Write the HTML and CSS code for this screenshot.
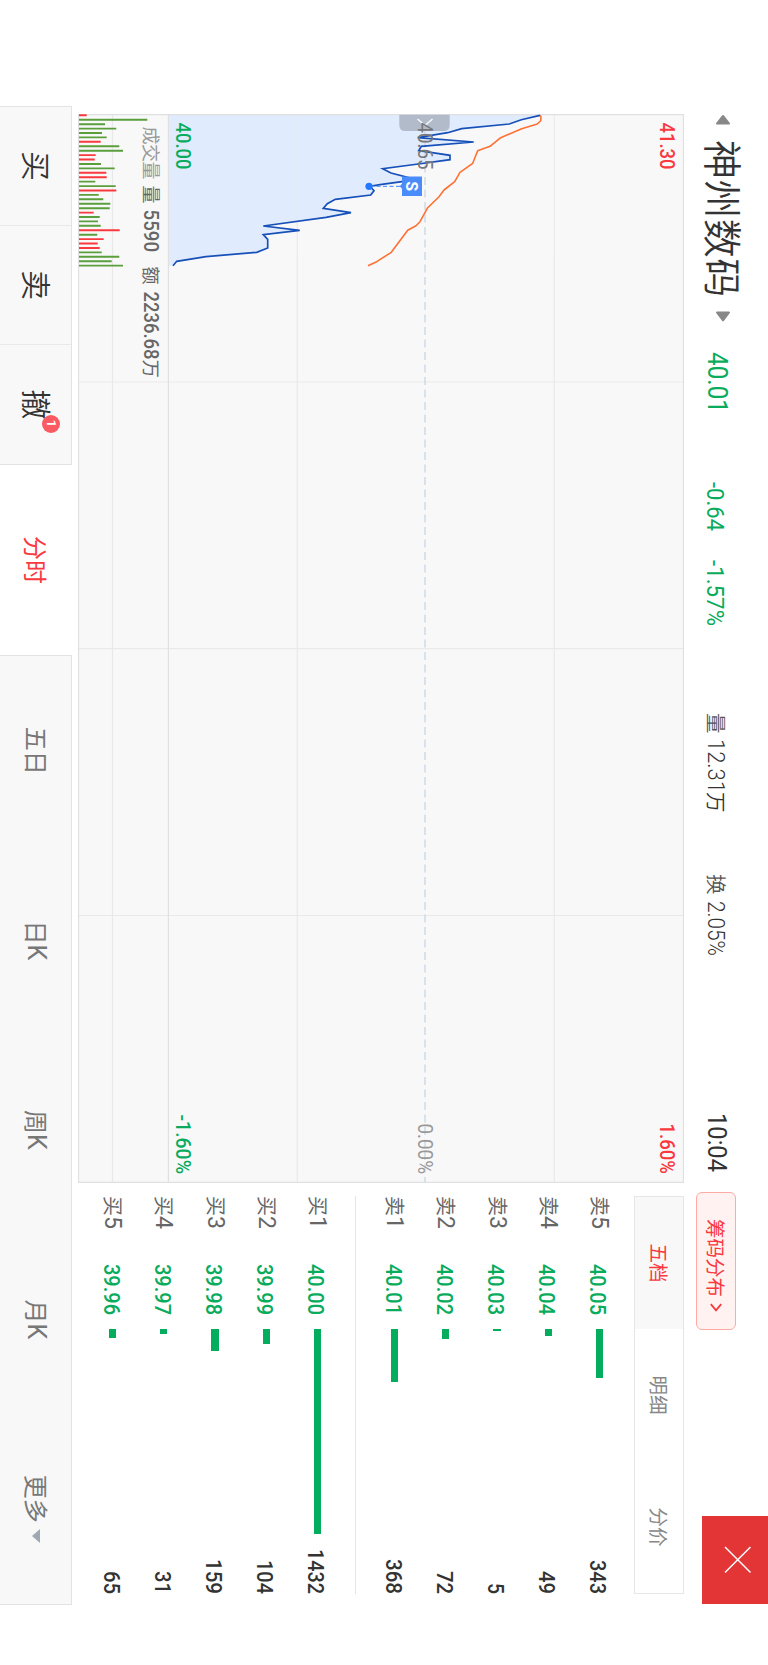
FILE: index.html
```html
<!DOCTYPE html>
<html lang="zh-CN">
<head>
<meta charset="utf-8">
<title>神州数码</title>
<link rel="stylesheet" href="styles.css">
</head>
<body>
<div class="stage">
  <header class="head">
    <svg class="tri" width="11" height="16"><path d="M1.5 7 9 1.2Q10.6 .4 10.6 2V14Q10.6 15.6 9 14.8L1.5 9Q.3 8 1.5 7Z"/></svg>
    <h1 class="name">神州数码</h1>
    <svg class="tri" width="11" height="16"><path d="M9.8 7 2 1.2Q.4 .4 .4 2V14Q.4 15.6 2 14.8L9.8 9Q11 8 9.8 7Z"/></svg>
    <svg class="num price green" width="61" height="20"><text y="20" textLength="61" lengthAdjust="spacingAndGlyphs">40.01</text></svg>
    <svg class="num chg green" width="49" height="16"><text y="16.500" textLength="49" lengthAdjust="spacingAndGlyphs">-0.64</text></svg>
    <svg class="num chg green" width="66" height="16"><text y="16.500" textLength="66" lengthAdjust="spacingAndGlyphs">-1.57%</text></svg>
    <div class="stat"><span class="k">量</span><svg class="num mid" width="51" height="17"><text x="-2" y="17" textLength="54" lengthAdjust="spacingAndGlyphs">12.31</text></svg><span class="unit">万</span></div>
    <div class="stat"><span class="k">换</span><svg class="num mid" width="54" height="17"><text x="-1" y="17" textLength="55" lengthAdjust="spacingAndGlyphs">2.05%</text></svg></div>
    <svg class="num clock" width="57" height="18"><text x="-2" y="18" textLength="59" lengthAdjust="spacingAndGlyphs">10:04</text></svg>
    <div class="chip">筹码分布<svg width="9" height="12"><path d="M1.2 .8 7.4 6 1.2 11.2"/></svg></div>
    <span></span>
    <div class="close"><svg width="88" height="66"><path d="M31 17.5 56.500 43M56.500 17.500 31 43"/></svg></div>
  </header>

  <main class="main">
    <svg class="chart" width="1069" height="606" viewBox="114 84 1069 606">
      <rect class="bg" x="114.700" y="84.500" width="1067.600" height="605"/>
      <path class="area" d="M114.700 599.500V228L119.700 246.700 124 258.700 128.700 306.300 132.700 320.300 137.700 350.300 142 294.300 146.300 346.700 150.700 349.300 155.300 318 159.700 318 164 349.700 168.700 385.300 173 377 178 358 181.700 366 184.700 388 186.300 398 190.700 394 195 397.300 199.300 432.700 203.700 440.700 208.300 444.700 212.700 417 217.300 442 226 504.700 230.300 468.300 234.700 504.700 239.300 500.300 248 500.300 252.300 511.300 256.700 562 261.300 591.300 265.700 595V599.500Z"/>
      <path class="grid" d="M114.700 213.700H1182.300M114.700 470.700H1182.300M114.700 655.500H1182.300M382 84.500V689.500M648.700 84.500V689.500M915.500 84.500V689.500"/>
      <path class="frame" d="M114.700 84.500H1182.300V689.500H114.700ZM114.700 599.600H1182.300"/>
      <path class="zero" d="M127 343H1182.300"/>
      <path class="avg" d="M115.300 228 117 227 120.700 227.300 124 230.700 128.700 246.300 137.700 267.300 146.300 278 150.700 290.300 163.300 295.300 172.300 308 181.700 313.300 190 324 196.700 329 207.700 340.300 221.700 348 225.700 352 230.300 360.300 252.300 376.700 261.700 391.300 265.700 400"/>
      <path class="line" d="M115.300 228 119.700 246.700 124 258.700 128.700 306.300 132.700 320.300 137.700 350.300 142 294.300 146.300 346.700 150.700 349.300 155.300 318 159.700 318 164 349.700 168.700 385.300 173 377 178 358 181.700 366 184.700 388 186.300 398 190.700 394 195 397.300 199.300 432.700 203.700 440.700 208.300 444.700 212.700 417 217.300 442 226 504.700 230.300 468.300 234.700 504.700 239.300 500.300 248 500.300 252.300 511.300 256.700 562 261.300 591.300 265.700 595"/>
      <path class="vol up" d="M115.300 689v-7.700M141.800 689v-21.700M155.100 689v-16.700M159.500 689v-15.700M172.800 689v-27.300M177.200 689v-27.700M190.500 689v-37.300M212.600 689v-14.700M230.300 689v-40.700M239.100 689v-24.700M243.500 689v-18.700M248 689v-20.700"/>
      <path class="vol down" d="M119.700 689v-68.300M124.200 689v-26M128.600 689v-37.300M133 689v-23M137.400 689v-27.700M146.300 689v-40.300M150.700 689v-44M164 689v-22M168.400 689v-35.700M181.600 689v-16.300M186.100 689v-36.700M194.900 689v-19.700M199.300 689v-24.300M203.700 689v-31.300M208.200 689v-30.700M217 689v-20.700M221.400 689v-19M225.800 689v-21.700M234.700 689v-18.300M252.400 689v-22.700M256.800 689v-40.300M261.200 689v-32.700M265.600 689v-44"/>
      <path class="handle" d="M114.700 318.300H125Q131 318.300 131 324.300V362.700Q131 368.700 125 368.700H114.700Z"/>
      <path class="handle-v" d="M119 335.500 125.500 343 119 350.500"/>
      <path class="pin" d="M186.300 368V396"/>
      <path class="flag" d="M176.400 346H196V366H188.800L186.300 368.300 183.800 366H176.400Z"/>
      <circle class="dot" cx="186.300" cy="399" r="3.600"/>
      <text class="s" x="186.300" y="361.800" text-anchor="middle">S</text>
      <g class="axis">
        <text class="red" x="122.500" y="108.500" textLength="47" lengthAdjust="spacingAndGlyphs">41.30</text>
        <text class="gray" x="122.500" y="350.500" textLength="47" lengthAdjust="spacingAndGlyphs">40.65</text>
        <text class="green" x="122.500" y="592" textLength="47" lengthAdjust="spacingAndGlyphs">40.00</text>
        <text class="red" x="1123.500" y="108.500" textLength="50.500" lengthAdjust="spacingAndGlyphs">1.60%</text>
        <text class="lgray" x="1123.500" y="350.500" textLength="50.500" lengthAdjust="spacingAndGlyphs">0.00%</text>
        <text class="green" x="1114.500" y="592" textLength="59.500" lengthAdjust="spacingAndGlyphs">-1.60%</text>
        <text class="cjk lgray" x="126.500" y="624" textLength="53">成交量</text>
        <text class="cjk dark" x="185.500" y="624">量</text>
        <text class="dark" x="209.500" y="624.300" textLength="42.500" lengthAdjust="spacingAndGlyphs">5590</text>
        <text class="cjk dark" x="266.500" y="624">额</text>
        <text class="dark" x="291.500" y="624.300" textLength="68" lengthAdjust="spacingAndGlyphs">2236.68</text>
        <text class="cjk dark" x="359.800" y="624">万</text>
      </g>
    </svg>

    <section class="book">
      <div class="seg"><span class="on">五档</span><span>明细</span><span>分价</span></div>
      <div class="side">
        <div class="row"><span class="lv">卖<i>5</i></span><svg class="num q green" width="51" height="16"><text y="16.700" textLength="51" lengthAdjust="spacingAndGlyphs">40.05</text></svg><b class="bar" style="width:49.300px"></b><svg class="num q" width="34" height="16"><text y="16.700" textLength="34" lengthAdjust="spacingAndGlyphs">343</text></svg></div>
        <div class="row"><span class="lv">卖<i>4</i></span><svg class="num q green" width="51" height="16"><text y="16.700" textLength="51" lengthAdjust="spacingAndGlyphs">40.04</text></svg><b class="bar" style="width:7.300px"></b><svg class="num q" width="23" height="16"><text y="16.700" textLength="23" lengthAdjust="spacingAndGlyphs">49</text></svg></div>
        <div class="row"><span class="lv">卖<i>3</i></span><svg class="num q green" width="51" height="16"><text y="16.700" textLength="51" lengthAdjust="spacingAndGlyphs">40.03</text></svg><b class="bar" style="width:2px"></b><svg class="num q" width="11" height="16"><text y="16.700" textLength="11" lengthAdjust="spacingAndGlyphs">5</text></svg></div>
        <div class="row"><span class="lv">卖<i>2</i></span><svg class="num q green" width="51" height="16"><text y="16.700" textLength="51" lengthAdjust="spacingAndGlyphs">40.02</text></svg><b class="bar" style="width:10px"></b><svg class="num q" width="23" height="16"><text y="16.700" textLength="23" lengthAdjust="spacingAndGlyphs">72</text></svg></div>
        <div class="row"><span class="lv">卖<i>1</i></span><svg class="num q green" width="51" height="16"><text y="16.700" textLength="51" lengthAdjust="spacingAndGlyphs">40.01</text></svg><b class="bar" style="width:53px"></b><svg class="num q" width="35" height="16"><text y="16.700" textLength="35" lengthAdjust="spacingAndGlyphs">368</text></svg></div>
      </div>
      <div class="side buy">
        <div class="row"><span class="lv">买<i>1</i></span><svg class="num q green" width="51" height="16"><text y="16.700" textLength="51" lengthAdjust="spacingAndGlyphs">40.00</text></svg><b class="bar" style="width:205.300px"></b><svg class="num q" width="45" height="16"><text y="16.700" textLength="45" lengthAdjust="spacingAndGlyphs">1432</text></svg></div>
        <div class="row"><span class="lv">买<i>2</i></span><svg class="num q green" width="51" height="16"><text y="16.700" textLength="51" lengthAdjust="spacingAndGlyphs">39.99</text></svg><b class="bar" style="width:15px"></b><svg class="num q" width="34" height="16"><text y="16.700" textLength="34" lengthAdjust="spacingAndGlyphs">104</text></svg></div>
        <div class="row"><span class="lv">买<i>3</i></span><svg class="num q green" width="51" height="16"><text y="16.700" textLength="51" lengthAdjust="spacingAndGlyphs">39.98</text></svg><b class="bar" style="width:22.700px"></b><svg class="num q" width="35" height="16"><text y="16.700" textLength="35" lengthAdjust="spacingAndGlyphs">159</text></svg></div>
        <div class="row"><span class="lv">买<i>4</i></span><svg class="num q green" width="51" height="16"><text y="16.700" textLength="51" lengthAdjust="spacingAndGlyphs">39.97</text></svg><b class="bar" style="width:5px"></b><svg class="num q" width="23" height="16"><text y="16.700" textLength="23" lengthAdjust="spacingAndGlyphs">31</text></svg></div>
        <div class="row"><span class="lv">买<i>5</i></span><svg class="num q green" width="51" height="16"><text y="16.700" textLength="51" lengthAdjust="spacingAndGlyphs">39.96</text></svg><b class="bar" style="width:9.700px"></b><svg class="num q" width="23" height="16"><text y="16.700" textLength="23" lengthAdjust="spacingAndGlyphs">65</text></svg></div>
      </div>
    </section>
  </main>

  <nav class="nav">
    <div class="trade">
      <span>买</span><span>卖</span><span><em>撤<small class="badge">1</small></em></span>
    </div>
    <div class="tab active">分时</div>
    <div class="tabs">
      <div class="tab">五日</div>
      <div class="tab">日<i>K</i></div>
      <div class="tab">周<i>K</i></div>
      <div class="tab">月<i>K</i></div>
      <div class="tab more">更多<svg width="14" height="8"><path d="M0 0H14L7 8Z"/></svg></div>
    </div>
  </nav>
</div>
</body>
</html>
```
FILE: styles.css
```css
* { box-sizing: border-box; }
html, body { margin: 0; padding: 0; }
html { overflow: hidden; }
body {
  width: 768px;
  height: 1665px;
  overflow: hidden;
  background: #fff;
  font-family: Roboto, "Noto Sans CJK SC", sans-serif;
  color: #333;
}
i, em { font-style: normal; }

/* Landscape screen turned a quarter clockwise */
.stage {
  width: 1665px;
  height: 768px;
  overflow: hidden;
  transform-origin: 0 0;
  transform: translateX(768px) rotate(90deg);
  display: flex;
  flex-direction: column;
}

.green { fill: #09ab5c; }
.red { fill: #f9383f; }
.gray { fill: #777; }
.lgray { fill: #999; }
.dark { fill: #666; }

.num { overflow: visible; flex: none; display: block; }
.num text { font-family: Roboto, sans-serif; }
.num:not(.green) { fill: #333; }

/* Header */
.head {
  height: 84px;
  flex: none;
  padding-left: 114px;
  display: grid;
  grid-template-columns: 26px 171px 41px 130px 78px 153px 161px 241px 77px 138px 186px 88px;
  align-items: start;
}
.tri { fill: #888; margin-top: 37px; display: block; }
.name {
  margin: 18px 0 0;
  font: 350 39px/50px "Noto Sans CJK SC", sans-serif;
  letter-spacing: .4px;
  white-space: nowrap;
}
.price { font-size: 28.500px; margin-top: 40px; }
.chg { font-size: 23px; margin-top: 45px; }
.mid { font-size: 24px; }
.clock { font-size: 25px; margin-top: 42px; }
.stat {
  display: flex;
  align-items: center;
  margin-top: 37px;
  height: 29px;
  font: 350 20.500px/29px "Noto Sans CJK SC", sans-serif;
}
.stat .k { width: 28px; color: #555; }
.chip {
  margin-top: 32px;
  width: 138px;
  height: 40px;
  border: 1px solid #ffaba5;
  border-radius: 6px;
  background: #fff2f1;
  color: #f9383f;
  display: flex;
  align-items: center;
  padding-left: 26px;
  font: 400 19.500px/38px "Noto Sans CJK SC", sans-serif;
}
.chip svg { margin-left: 6px; fill: none; stroke: #f9383f; stroke-width: 1.800; }
.close { height: 66px; background: #e33436; }
.close svg { display: block; fill: none; stroke: #fff; stroke-width: 1.500; }

/* Chart */
.main { display: flex; height: 606px; padding-left: 114px; }
.chart { display: block; flex: none; }
.bg { fill: #f8f8f8; }
.area { fill: #e0ebfd; }
.grid { fill: none; stroke: #e9e9e9; stroke-width: 1.200; }
.frame { fill: none; stroke: #e0e0e0; stroke-width: 1.200; }
.zero { stroke: #d0dae4; stroke-width: 1.500; stroke-dasharray: 8 4.500; }
.avg { fill: none; stroke: #ff7032; stroke-width: 1.600; stroke-linejoin: round; }
.line { fill: none; stroke: #1650b8; stroke-width: 1.700; }
.vol { fill: none; stroke-width: 1.900; }
.up { stroke: #f9383f; }
.down { stroke: #5a9f3c; }
.handle { fill: #b1bbca; }
.handle-v { fill: none; stroke: #fff; stroke-width: 1.300; }
.pin { stroke: #5c9bff; stroke-width: 1.300; stroke-dasharray: 4 2.500; }
.flag { fill: #4b8cfc; }
.dot { fill: #2478ff; }
.s { fill: #fff; font: 700 16px Roboto, sans-serif; }
.axis text { font-family: Roboto, sans-serif; font-size: 20px; font-weight: 500; }
.axis .gray, .axis .lgray { font-weight: 400; }
.axis .cjk { font-family: "Noto Sans CJK SC", sans-serif; font-size: 18px; font-weight: 400; }

/* Order book */
.book { margin-left: 13px; width: 398px; }
.seg {
  height: 50px;
  display: grid;
  grid-template-columns: repeat(3, 1fr);
  border: 1px solid #e6e6e6;
}
.seg span {
  text-align: center;
  font: 400 19.500px/47px "Noto Sans CJK SC", sans-serif;
  color: #888;
}
.seg .on { color: #f9383f; background: #f8f8f8; }
.side { height: 279px; padding-top: 9px; border-bottom: 1px solid #e6e6e6; }
.side.buy { height: 270px; border: 0; padding-top: 12px; }
.row {
  height: 51.200px;
  display: grid;
  grid-template-columns: 67.500px 65px 1fr auto;
  align-items: center;
}
.lv {
  display: flex;
  padding-top: 1px;
  font: 400 20px/30px "Noto Sans CJK SC", sans-serif;
  color: #666;
}
.lv i { font: 400 23px/32px Roboto, sans-serif; width: 13px; }
.q { font-size: 22.500px; font-weight: 500; }
.bar { height: 7.300px; background: #04ad5d; }

/* Bottom navigation */
.nav {
  flex: none;
  height: 72px;
  margin-top: 6px;
  padding-left: 106px;
  display: flex;
  font-family: "Noto Sans CJK SC", sans-serif;
}
.trade {
  width: 359px;
  display: grid;
  grid-template-columns: repeat(3, 1fr);
  background: #f8f8f8;
  border: 1px solid #e3e3e3;
  border-bottom: 0;
}
.trade > span {
  text-align: center;
  font-size: 30px;
  font-weight: 350;
  line-height: 67px;
  border-right: 1px solid #e9e9e9;
}
.trade > span:last-child { border-right: 0; }
.trade em { position: relative; }
.badge {
  position: absolute;
  left: 25px;
  top: 0;
  width: 18px;
  height: 18px;
  border-radius: 50%;
  background: #fa5a61;
  color: #fff;
  font: 500 13px/18px Roboto, sans-serif;
}
.tabs {
  width: 949.500px;
  display: grid;
  grid-template-columns: repeat(5, 1fr);
  background: #f8f8f8;
  border: 1px solid #e3e3e3;
  border-bottom: 0;
}
.tab {
  display: flex;
  justify-content: center;
  font-size: 24px;
  font-weight: 400;
  line-height: 68px;
  color: #777;
}
.tab i { font: 400 25px/69px Roboto, sans-serif; }
.tab.active { width: 190px; line-height: 71px; color: #f9383f; }
.more { align-items: flex-start; }
.more svg { margin: 31px 0 0 6px; fill: #a0a8b4; }
```
